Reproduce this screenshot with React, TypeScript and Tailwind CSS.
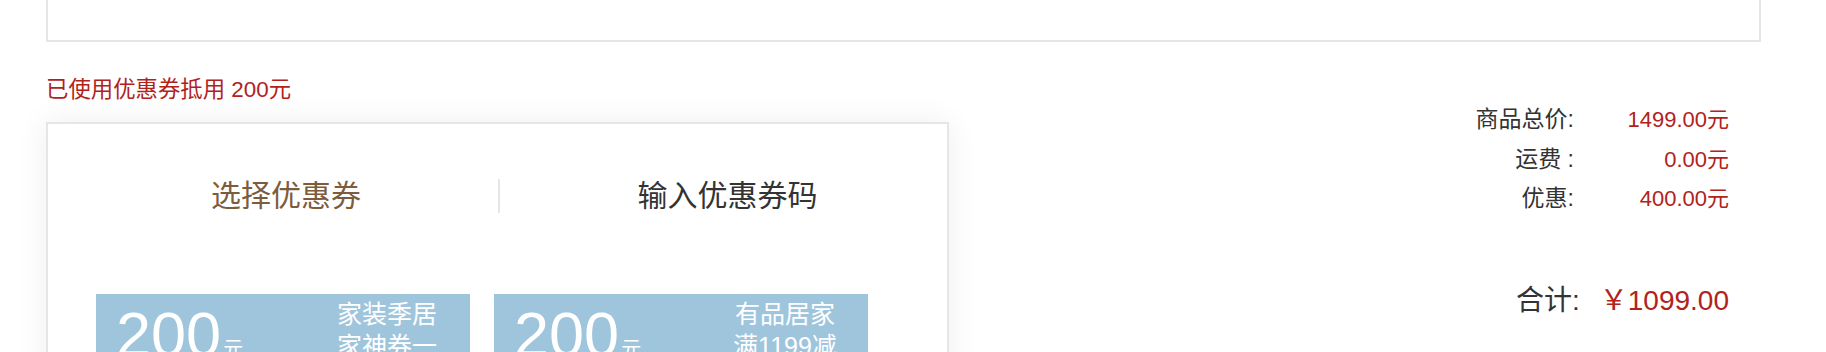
import React from "react";

type Coupon = {
  amount: string;
  lines: string[];
};

const coupons: Coupon[] = [
  { amount: "200", lines: ["家装季居", "家神券一"] },
  { amount: "200", lines: ["有品居家", "满1199减"] },
];

const summary = [
  { label: "商品总价:", value: "1499.00元" },
  { label: "运费 :", value: "0.00元" },
  { label: "优惠:", value: "400.00元" },
];

const CouponCard: React.FC<{ coupon: Coupon }> = ({ coupon }) => (
  <div className="flex h-[130px] w-[374px] justify-between bg-[#9fc5dd] text-white">
    <div className="mt-[9px] flex items-baseline pl-[20px]">
      <span className="text-[63px] font-normal leading-none">{coupon.amount}</span>
      <span className="ml-[2px] text-[20px] leading-none">元</span>
    </div>
    <div className="mr-[23px] w-[120px] pt-[4px] text-center text-[25px] leading-[32px]">
      {coupon.lines.map((line) => (
        <div key={line}>{line}</div>
      ))}
    </div>
  </div>
);

const App: React.FC = () => {
  return (
    <div className="min-h-screen bg-white font-['Liberation_Sans','Noto_Sans_CJK_SC',sans-serif]">
      <div className="ml-[46px] w-[1715px]">
        {/* bottom of the previous block */}
        <div className="h-[42px] border-x-2 border-b-2 border-[#e6e6e6]" />

        <div className="flex items-start">
          <div className="w-[903px]">
            <p className="mt-[34px] text-[22.4px] leading-[28px] text-[#b2221c]">已使用优惠券抵用 200元</p>

            <div className="mt-[18px] h-[280px] border-2 border-[#e6e6e6] bg-white shadow-[0_0_30px_rgba(0,0,0,0.07)]">
              <div className="flex items-center pt-[55px] text-[30px] leading-[34px]">
                <div className="w-[450px] pl-[26px] text-center text-[#7d5c3e]">选择优惠券</div>
                <div className="h-[34px] w-[2px] bg-[#e6e6e6]" />
                <div className="flex-1 pl-[8px] text-center text-[#333]">输入优惠券码</div>
              </div>

              <div className="mt-[81px] flex gap-[24px] pl-[48px]">
                {coupons.map((c, i) => (
                  <CouponCard key={i} coupon={c} />
                ))}
              </div>
            </div>
          </div>

          <div className="flex-1 pr-[32px] pt-[58px]">
            {summary.map((row) => (
              <div key={row.label} className="flex items-center justify-end leading-[39.5px]">
                <span className="text-right text-[23px] text-[#333]">{row.label}</span>
                <span className="w-[155px] text-right text-[22px] text-[#b2221c]">{row.value}</span>
              </div>
            ))}

            <div className="mt-[62px] flex items-center justify-end gap-[20px] text-[28px] leading-[40px]">
              <span className="text-[#333]">合计:</span>
              <span className="text-[#b2221c]">￥1099.00</span>
            </div>
          </div>
        </div>
      </div>
    </div>
  );
};

export default App;
